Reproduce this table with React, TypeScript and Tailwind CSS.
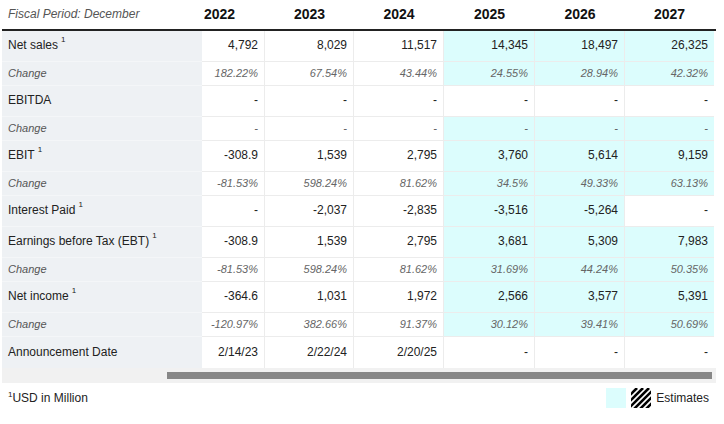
import React from "react";

type Cell = { v: string; e?: boolean };
type Row = { label: string; sup?: boolean; change?: boolean; cells: Cell[] };

const c = (v: string, e = false): Cell => ({ v, e });

const rows: Row[] = [
  { label: "Net sales", sup: true, cells: [c("4,792"), c("8,029"), c("11,517"), c("14,345", true), c("18,497", true), c("26,325", true)] },
  { label: "Change", change: true, cells: [c("182.22%"), c("67.54%"), c("43.44%"), c("24.55%", true), c("28.94%", true), c("42.32%", true)] },
  { label: "EBITDA", cells: [c("-"), c("-"), c("-"), c("-"), c("-"), c("-")] },
  { label: "Change", change: true, cells: [c("-"), c("-"), c("-"), c("-", true), c("-", true), c("-", true)] },
  { label: "EBIT", sup: true, cells: [c("-308.9"), c("1,539"), c("2,795"), c("3,760", true), c("5,614", true), c("9,159", true)] },
  { label: "Change", change: true, cells: [c("-81.53%"), c("598.24%"), c("81.62%"), c("34.5%", true), c("49.33%", true), c("63.13%", true)] },
  { label: "Interest Paid", sup: true, cells: [c("-"), c("-2,037"), c("-2,835"), c("-3,516", true), c("-5,264", true), c("-")] },
  { label: "Earnings before Tax (EBT)", sup: true, cells: [c("-308.9"), c("1,539"), c("2,795"), c("3,681", true), c("5,309", true), c("7,983", true)] },
  { label: "Change", change: true, cells: [c("-81.53%"), c("598.24%"), c("81.62%"), c("31.69%", true), c("44.24%", true), c("50.35%", true)] },
  { label: "Net income", sup: true, cells: [c("-364.6"), c("1,031"), c("1,972"), c("2,566", true), c("3,577", true), c("5,391", true)] },
  { label: "Change", change: true, cells: [c("-120.97%"), c("382.66%"), c("91.37%"), c("30.12%", true), c("39.41%", true), c("50.69%", true)] },
  { label: "Announcement Date", cells: [c("2/14/23"), c("2/22/24"), c("2/20/25"), c("-"), c("-"), c("-")] },
];

const widths = ["w-[63px]", "w-[89px]", "w-[90px]", "w-[91px]", "w-[90px]", "w-[89px]"];
const years = ["2022", "2023", "2024", "2025", "2026", "2027"];

export default function App() {
  return (
    <div className="w-[724px] h-[424px] bg-white text-[#222] overflow-hidden" style={{ fontFamily: '"Liberation Sans", Arial, sans-serif' }}>
      <div className="pl-[2px] w-[716px]">
        {/* header */}
        <div className="flex h-[31px] border-b-2 border-[#222] pb-[1px]">
          <div className="w-[200px] pl-[6px] flex items-center italic text-[12px] text-[#555]">Fiscal Period: December</div>
          {years.map((y, i) => (
            <div key={y} className={`${widths[i]} flex items-center ${i === 0 ? "justify-start pl-[2px]" : "justify-center"} font-bold text-[14px] text-[#111]`}>
              {y}
            </div>
          ))}
        </div>
        {rows.map((r, ri) => {
          const last = ri === rows.length - 1;
          return (
            <div key={ri} className={`flex ${r.change ? "h-[24px]" : "h-[31px]"}`}>
              <div className={`w-[200px] bg-[#eef1f4] pl-[6px] flex items-center ${last ? "" : "border-b border-[#f4f6f8]"} ${r.change ? "italic text-[11px] text-[#555]" : "text-[12px] text-[#222] pb-[2px]"}`}>
                {r.label}
                {r.sup && <sup className="text-[8px] ml-[3px] relative -top-[5px]">1</sup>}
              </div>
              {r.cells.map((cell, ci) => (
                <div
                  key={ci}
                  className={`${widths[ci]} flex items-center justify-end pr-[6px] ${cell.e ? "bg-[#dcfdfd]" : "bg-white"} ${ci < 5 ? "border-r" : ""} ${last ? "" : "border-b"} border-[#ececec] ${r.change ? "italic text-[11px] text-[#666]" : "text-[12px] text-[#222] pb-[2px]"}`}
                >
                  {cell.v}
                </div>
              ))}
            </div>
          );
        })}
        {/* scrollbar */}
        <div className="h-[15px] bg-[#f1f1f1] flex items-center pl-[165px] pr-[4px]">
          <div className="h-[7px] w-full bg-[#878787]" />
        </div>
      </div>
      {/* footer */}
      <div className="flex items-center justify-between pl-[8px] pr-[15px] mt-[5px] h-[20px]">
        <div className="text-[12px] text-[#222]">
          <sup className="text-[8px] relative -top-[5px]">1</sup>USD in Million
        </div>
        <div className="flex items-center gap-[5px]">
          <div className="w-[20px] h-[20px] bg-[#dcfdfd]" />
          <svg width="20" height="20" viewBox="0 0 20 20">
            <defs>
              <clipPath id="cl">
                <rect x="0" y="0" width="20" height="20" />
              </clipPath>
            </defs>
            <rect width="20" height="20" fill="#fff" />
            <g clipPath="url(#cl)" stroke="#000" strokeWidth="2.6">
              {[-16, -10, -4, 2, 8, 14, 20, 26].map((o) => (
                <line key={o} x1={o} y1={22} x2={o + 22} y2={0} />
              ))}
            </g>
          </svg>
          <div className="text-[12px] text-[#222]">Estimates</div>
        </div>
      </div>
    </div>
  );
}
